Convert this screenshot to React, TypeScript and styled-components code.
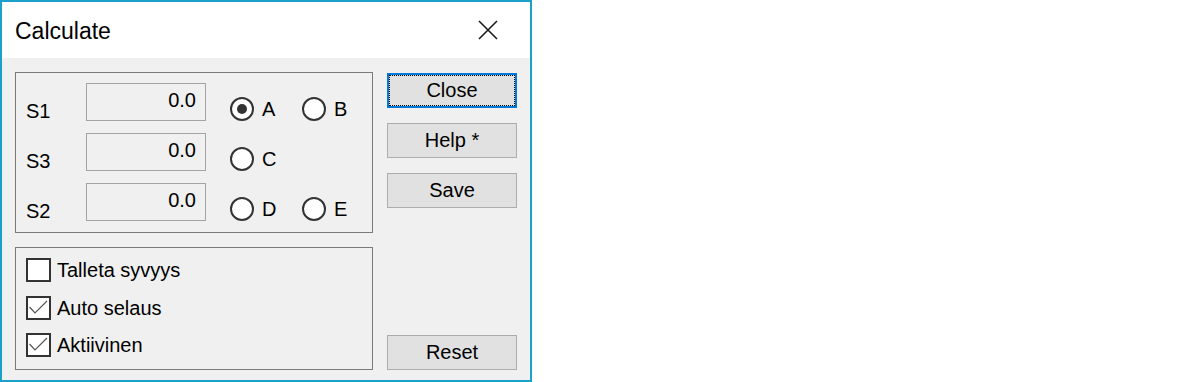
import React from "react";
import styled, { createGlobalStyle } from "styled-components";

const GlobalStyle = createGlobalStyle`
  html, body {
    margin: 0;
    padding: 0;
    background: #ffffff;
  }
  body {
    font-family: "Liberation Sans", Arial, sans-serif;
    color: #000;
  }
`;

const Window = styled.div`
  width: 532px;
  height: 382px;
  box-sizing: border-box;
  border: 2px solid #1ba1c9;
  background: #f0f0f0;
  display: flex;
  flex-direction: column;
`;

const TitleBar = styled.div`
  height: 56px;
  background: #ffffff;
  display: flex;
  align-items: center;
  justify-content: space-between;
  padding: 0 32px 0 13px;
`;

const Title = styled.div`
  font-size: 23px;
  padding-top: 2px;
`;

const CloseX = styled.svg`
  width: 20px;
  height: 20px;
  display: block;
`;

const Body = styled.div`
  flex: 1;
  display: flex;
  gap: 14px;
  padding: 14px 13px 10px 13px;
`;

const LeftColumn = styled.div`
  width: 358px;
  display: flex;
  flex-direction: column;
  gap: 14px;
`;

const Group = styled.div<{ $height: number }>`
  box-sizing: border-box;
  height: ${(p) => p.$height}px;
  border: 1px solid #7a7a7a;
  padding: 10px 10px;
  display: flex;
  flex-direction: column;
  gap: ${(p) => (p.$height > 140 ? "12px" : "13.5px")};
`;

const ValueRow = styled.div`
  display: grid;
  grid-template-columns: 60px 120px 24px 72px 72px;
  height: 38px;
  font-size: 20px;
`;

const RowLabel = styled.div`
  align-self: end;
  line-height: 24px;
  margin-bottom: -2px;
`;

const Field = styled.input`
  box-sizing: border-box;
  width: 120px;
  height: 38px;
  border: 1px solid #a3a3a3;
  background: #f0f0f0;
  padding: 4px 9px 8px 4px;
  margin: 0;
  font: inherit;
  line-height: 24px;
  text-align: right;
  color: #000;
  outline: none;
`;

const Radio = styled.label`
  align-self: end;
  display: flex;
  align-items: center;
  gap: 8px;
  line-height: 24px;
`;

const RadioCircle = styled.span<{ $checked?: boolean }>`
  box-sizing: border-box;
  width: 24px;
  height: 24px;
  border: 2px solid #333;
  border-radius: 50%;
  background: #fff;
  display: flex;
  align-items: center;
  justify-content: center;

  &::after {
    content: "";
    width: 10px;
    height: 10px;
    border-radius: 50%;
    background: ${(p) => (p.$checked ? "#333" : "transparent")};
  }
`;

const CheckRow = styled.label`
  display: flex;
  align-items: center;
  gap: 6px;
  font-size: 20px;
  line-height: 24px;
`;

const CheckBox = styled.span`
  box-sizing: border-box;
  width: 25px;
  height: 24px;
  border: 2px solid #333;
  background: #fff;
  display: flex;
`;

const RightColumn = styled.div`
  width: 130px;
  display: flex;
  flex-direction: column;
  gap: 15px;
  padding-top: 1px;
`;

const Button = styled.button<{ $focused?: boolean; $bottom?: boolean }>`
  box-sizing: border-box;
  width: 130px;
  height: 35px;
  margin: 0;
  margin-top: ${(p) => (p.$bottom ? "auto" : "0")};
  padding: 0;
  background: #e1e1e1;
  border: ${(p) => (p.$focused ? "2px solid #0078d7" : "1px solid #adadad")};
  outline: ${(p) => (p.$focused ? "1px dotted #000" : "none")};
  outline-offset: -3px;
  font-family: "Liberation Sans", Arial, sans-serif;
  font-size: 20px;
  color: #000;
  display: flex;
  align-items: center;
  justify-content: center;
`;

const Check = () => (
  <svg width="21" height="20" viewBox="0 0 21 20">
    <polyline
      points="1.5,9 7,15 19,3"
      fill="none"
      stroke="#555"
      strokeWidth="1.2"
    />
  </svg>
);

const rows = [
  { label: "S1", radios: [{ name: "A", checked: true }, { name: "B" }] },
  { label: "S3", radios: [{ name: "C" }] },
  { label: "S2", radios: [{ name: "D" }, { name: "E" }] },
];

const checks = [
  { text: "Talleta syvyys", checked: false },
  { text: "Auto selaus", checked: true },
  { text: "Aktiivinen", checked: true },
];

export default function App() {
  return (
    <>
      <GlobalStyle />
      <Window>
        <TitleBar>
          <Title>Calculate</Title>
          <CloseX viewBox="0 0 20 20">
            <path d="M1 1 L19 19 M19 1 L1 19" stroke="#1a1a1a" strokeWidth="1.6" />
          </CloseX>
        </TitleBar>
        <Body>
          <LeftColumn>
            <Group $height={161}>
              {rows.map((row) => (
                <ValueRow key={row.label}>
                  <RowLabel>{row.label}</RowLabel>
                  <Field readOnly value="0.0" />
                  <span />
                  {row.radios.map((r) => (
                    <Radio key={r.name}>
                      <RadioCircle $checked={r.checked} />
                      {r.name}
                    </Radio>
                  ))}
                </ValueRow>
              ))}
            </Group>
            <Group $height={123}>
              {checks.map((c) => (
                <CheckRow key={c.text}>
                  <CheckBox>{c.checked && <Check />}</CheckBox>
                  {c.text}
                </CheckRow>
              ))}
            </Group>
          </LeftColumn>
          <RightColumn>
            <Button $focused>Close</Button>
            <Button>Help *</Button>
            <Button>Save</Button>
            <Button $bottom>Reset</Button>
          </RightColumn>
        </Body>
      </Window>
    </>
  );
}
